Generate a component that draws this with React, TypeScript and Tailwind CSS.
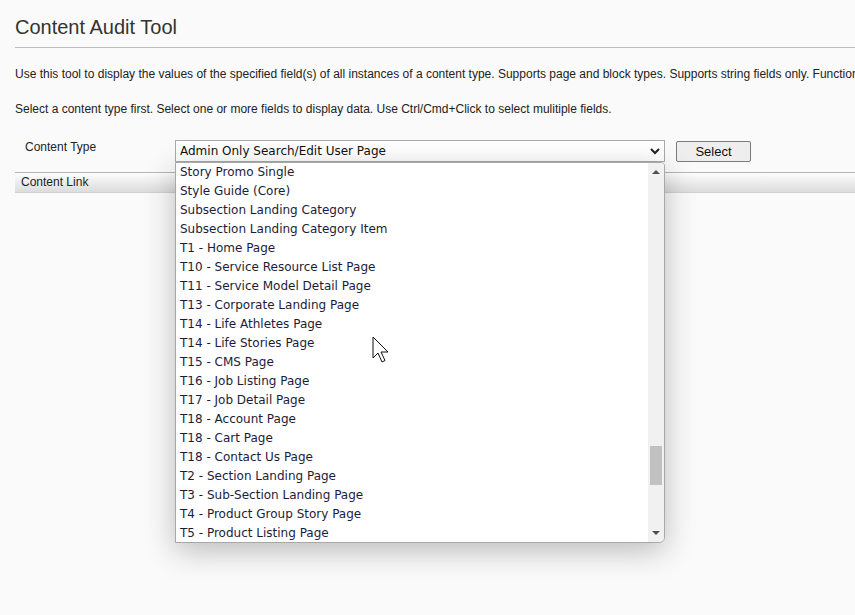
import React from "react";

const items = [
  "Story Promo Single",
  "Style Guide (Core)",
  "Subsection Landing Category",
  "Subsection Landing Category Item",
  "T1 - Home Page",
  "T10 - Service Resource List Page",
  "T11 - Service Model Detail Page",
  "T13 - Corporate Landing Page",
  "T14 - Life Athletes Page",
  "T14 - Life Stories Page",
  "T15 - CMS Page",
  "T16 - Job Listing Page",
  "T17 - Job Detail Page",
  "T18 - Account Page",
  "T18 - Cart Page",
  "T18 - Contact Us Page",
  "T2 - Section Landing Page",
  "T3 - Sub-Section Landing Page",
  "T4 - Product Group Story Page",
  "T5 - Product Listing Page",
];

const Dropdown = () => {
  return (
    <div className="absolute left-0 top-[22px] w-[490px] h-[381px] bg-white border border-[#a8a8a8] rounded-br-[6px] rounded-tr-[4px] shadow-[0_8px_30px_rgba(0,0,0,0.25)] flex overflow-hidden">
      <ul className="flex-1 pt-0 font-['DejaVu_Sans',sans-serif] text-[12px] text-[#1c1c3a]">
        {items.map((item) => (
          <li key={item} className="h-[19px] leading-[19px] pl-[4px] whitespace-nowrap">
            {item}
          </li>
        ))}
      </ul>
      <div className="w-[16px] bg-[#f1f1f1] flex flex-col items-center">
        <div className="h-[17px] flex items-center justify-center">
          <svg width="8" height="5" viewBox="0 0 8 5">
            <path d="M0 5 L4 1 L8 5 Z" fill="#505050" />
          </svg>
        </div>
        <div className="flex-1 w-full px-[2px] pt-[266px]">
          <div className="h-[39px] bg-[#c1c1c1]" />
        </div>
        <div className="h-[17px] flex items-center justify-center">
          <svg width="8" height="5" viewBox="0 0 8 5">
            <path d="M0 0 L8 0 L4 4 Z" fill="#505050" />
          </svg>
        </div>
      </div>
    </div>
  );
};

export default function App() {
  return (
    <div className="relative min-h-[615px] w-[855px] overflow-hidden bg-[#fafafa] font-['Liberation_Sans',Arial,sans-serif] text-[#222]">
      <div className="pl-[15px]">
        <h1 className="pt-[15px] pb-[8px] text-[20px] leading-[24px] text-[#333] border-b border-[#bdbdbd]">
          Content Audit Tool
        </h1>
        <p className="mt-[19px] text-[12px] leading-[14px] whitespace-nowrap overflow-hidden">
          Use this tool to display the values of the specified field(s) of all instances of a content type. Supports page and block types. Supports string fields only. Functionality
        </p>
        <p className="mt-[21px] text-[12px] leading-[14px] whitespace-nowrap">
          Select a content type first. Select one or more fields to display data. Use Ctrl/Cmd+Click to select mulitiple fields.
        </p>
        <div className="mt-[24px] flex items-start">
          <div className="w-[160px] pl-[10px] text-[12px] leading-[14px]">Content Type</div>
          <div className="relative">
            <div className="w-[490px] h-[22px] bg-white border border-[#a9a9a9] flex items-center justify-between pl-[4px] pr-[4px] font-['DejaVu_Sans',sans-serif] text-[12px] text-[#111]">
              <span>Admin Only Search/Edit User Page</span>
              <svg width="10" height="7" viewBox="0 0 10 7">
                <path d="M1 1 L5 5 L9 1" stroke="#222" strokeWidth="2" fill="none" />
              </svg>
            </div>
            <Dropdown />
          </div>
          <button className="ml-[11px] mt-[1px] w-[75px] h-[21px] border border-[#7a7a7a] rounded-[2px] bg-[#eeeeee] text-[13px] leading-[19px] text-[#111]">
            Select
          </button>
        </div>
        <div className="mt-[10px] h-[21px] border-t border-[#b5b5b5] border-b border-b-[#d0d0d0] bg-gradient-to-b from-[#fdfdfd] to-[#dcdcdc] pl-[6px] text-[12px] leading-[18px] text-[#222]">
          Content Link
        </div>
      </div>
      <svg className="absolute left-[372px] top-[336px]" width="20" height="27" viewBox="0 0 20 27">
        <path d="M1 1 L1 22 L6 17 L10 26 L13 24.5 L9 16 L16 16 Z" fill="white" stroke="#111" strokeWidth="1" strokeLinejoin="round" />
      </svg>
    </div>
  );
}
